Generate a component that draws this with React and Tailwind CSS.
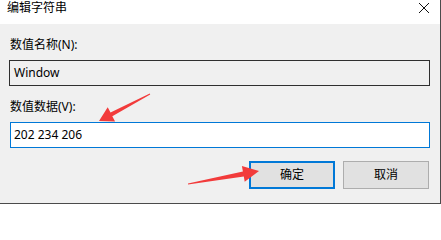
import React from "react";

const font = { fontFamily: '"Noto Sans", "Noto Sans CJK SC", sans-serif' };

function CloseIcon() {
  return (
    <svg width="12" height="12" viewBox="0 0 12 12" className="mt-[2px]">
      <path d="M1 1 L11 11 M11 1 L1 11" stroke="#111" strokeWidth="1" fill="none" />
    </svg>
  );
}

function Arrows() {
  // red annotation arrows drawn over the dialog
  return (
    <svg
      className="absolute inset-0 pointer-events-none"
      width="441"
      height="204"
      viewBox="0 0 441 204"
    >
      <polygon
        fill="#f23b3b"
        points="99,121 107.7,107.3 110.5,112.6 149.8,93.6 150.2,94.4 112.3,116.2 115.1,121.5"
      />
      <polygon
        fill="#f23b3b"
        points="259,171 241.9,166 242.9,171.4 188,183.4 188,184.6 243.8,176.4 244.7,181.8"
      />
    </svg>
  );
}

export default function App() {
  return (
    <div
      className="relative w-[441px] h-[204px] overflow-hidden bg-[#f0f0f0] border-r border-b border-[#4b4b4b] text-[12px] leading-[16px] text-black"
      style={font}
    >
      <div className="h-[24px] bg-white flex items-start justify-between pl-[7px] pr-[10px]">
        <span>编辑字符串</span>
        <CloseIcon />
      </div>

      <div className="flex flex-col pl-[9px] pr-[10px]">
        <label className="mt-[13px] pl-[1px]">数值名称(N):</label>
        <div className="mt-[7px] h-[26px] border border-[#2f2f2f] bg-[#f0f0f0] flex items-center pl-[4px]">
          Window
        </div>

        <label className="mt-[13px] pl-[1px]">数值数据(V):</label>
        <div className="mt-[7px] h-[26px] ml-[1px] border border-[#0078d7] bg-white flex items-center pl-[3px]">
          202 234 206
        </div>

        <div className="mt-[13px] flex justify-end gap-[8px] pr-[1px]">
          <button className="w-[86px] h-[28px] border-2 border-[#0078d7] bg-[#e1e1e1]">
            确定
          </button>
          <button className="w-[86px] h-[28px] border border-[#adadad] bg-[#e1e1e1]">
            取消
          </button>
        </div>
      </div>

      <Arrows />
    </div>
  );
}
